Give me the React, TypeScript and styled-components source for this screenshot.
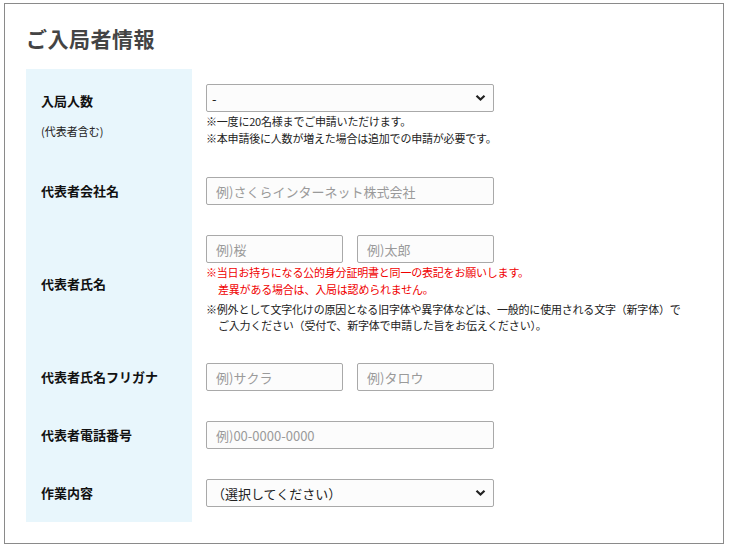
import styled, { createGlobalStyle } from 'styled-components';

const GlobalStyle = createGlobalStyle`
  html, body {
    margin: 0;
    padding: 0;
    background: #fff;
  }
  body {
    font-family: "Noto Sans CJK JP", "Noto Sans", sans-serif;
    color: #222;
  }
`;

const Panel = styled.section`
  box-sizing: border-box;
  width: 720px;
  height: 541px;
  margin: 3px 0 0 4px;
  border: 1px solid #8a8a8a;
  padding: 20px 21px 0;
`;

const Title = styled.h2`
  margin: 0 0 17px;
  font-size: 21px;
  line-height: 28px;
  font-weight: 700;
  color: #444;
  letter-spacing: 0.5px;
`;

const FormGrid = styled.div`
  display: grid;
  grid-template-columns: 166px 1fr;
`;

const LabelCell = styled.div<{ $gap?: number }>`
  background: #e8f6fc;
  padding: 0 14px 0 15px;
  display: flex;
  flex-direction: column;
  justify-content: center;
  gap: ${(p) => p.$gap ?? 0}px;
`;

const Label = styled.div`
  font-size: 13px;
  font-weight: 700;
  line-height: 18px;
  color: #111;
`;

const SubLabel = styled.div`
  font-size: 11px;
  line-height: 16px;
  color: #222;
`;

const ValueCell = styled.div`
  padding: 15px 14px;
  display: flex;
  flex-direction: column;
`;

const FieldRow = styled.div`
  display: flex;
  gap: 14px;
`;

const TextInput = styled.input<{ $width: number }>`
  box-sizing: border-box;
  width: ${(p) => p.$width}px;
  height: 28px;
  border: 1px solid #a9a9a9;
  border-radius: 2px;
  background: #fcfcfc;
  padding: 0 9px;
  font-family: inherit;
  font-size: 13px;
  color: #333;
  &::placeholder {
    color: #9a9a9a;
  }
`;

const SelectWrap = styled.div`
  position: relative;
  width: 288px;
  height: 28px;
`;

const Select = styled.select<{ $pad?: number }>`
  box-sizing: border-box;
  width: 100%;
  height: 100%;
  appearance: none;
  border: 1px solid #a9a9a9;
  border-radius: 2px;
  background: #fcfcfc;
  padding: 0 28px 0 ${(p) => p.$pad ?? 5}px;
  font-family: inherit;
  font-size: 13px;
  color: #222;
`;

const Chevron = styled.svg`
  position: absolute;
  right: 8px;
  top: 10px;
  pointer-events: none;
`;

const Notes = styled.div<{ $red?: boolean; $top?: number; $lh?: number }>`
  margin-top: ${(p) => p.$top ?? 0}px;
  font-size: 11px;
  line-height: ${(p) => p.$lh ?? 17}px;
  letter-spacing: -0.2px;
  color: ${(p) => (p.$red ? '#f00000' : '#222')};
`;

const Line = styled.div<{ $indent?: boolean }>`
  padding-left: ${(p) => (p.$indent ? 12 : 0)}px;
  white-space: nowrap;
`;

function Dropdown({ value, pad }: { value: string; pad?: number }) {
  return (
    <SelectWrap>
      <Select $pad={pad} defaultValue={value}>
        <option>{value}</option>
      </Select>
      <Chevron width="11" height="8" viewBox="0 0 11 8">
        <path d="M1.5 1.8 L5.5 5.6 L9.5 1.8" fill="none" stroke="#222" strokeWidth="2.2" />
      </Chevron>
    </SelectWrap>
  );
}

export default function App() {
  return (
    <>
      <GlobalStyle />
      <Panel>
        <Title>ご入局者情報</Title>
        <FormGrid>
          <LabelCell $gap={13}>
            <Label>入局人数</Label>
            <SubLabel>(代表者含む)</SubLabel>
          </LabelCell>
          <ValueCell>
            <Dropdown value="-" />
            <Notes $top={1}>
              <Line>※一度に20名様までご申請いただけます。</Line>
              <Line>※本申請後に人数が増えた場合は追加での申請が必要です。</Line>
            </Notes>
          </ValueCell>

          <LabelCell>
            <Label>代表者会社名</Label>
          </LabelCell>
          <ValueCell>
            <TextInput $width={288} placeholder="例)さくらインターネット株式会社" />
          </ValueCell>

          <LabelCell>
            <Label>代表者氏名</Label>
          </LabelCell>
          <ValueCell>
            <FieldRow>
              <TextInput $width={137} placeholder="例)桜" />
              <TextInput $width={137} placeholder="例)太郎" />
            </FieldRow>
            <Notes $red $top={1}>
              <Line>※当日お持ちになる公的身分証明書と同一の表記をお願いします。</Line>
              <Line $indent>差異がある場合は、入局は認められません。</Line>
            </Notes>
            <Notes $top={3} $lh={16}>
              <Line>※例外として文字化けの原因となる旧字体や異字体などは、一般的に使用される文字（新字体）で</Line>
              <Line $indent>ご入力ください（受付で、新字体で申請した旨をお伝えください）。</Line>
            </Notes>
          </ValueCell>

          <LabelCell>
            <Label>代表者氏名フリガナ</Label>
          </LabelCell>
          <ValueCell>
            <FieldRow>
              <TextInput $width={137} placeholder="例)サクラ" />
              <TextInput $width={137} placeholder="例)タロウ" />
            </FieldRow>
          </ValueCell>

          <LabelCell>
            <Label>代表者電話番号</Label>
          </LabelCell>
          <ValueCell>
            <TextInput $width={288} placeholder="例)00-0000-0000" />
          </ValueCell>

          <LabelCell>
            <Label>作業内容</Label>
          </LabelCell>
          <ValueCell>
            <Dropdown value="（選択してください）" />
          </ValueCell>
        </FormGrid>
      </Panel>
    </>
  );
}
